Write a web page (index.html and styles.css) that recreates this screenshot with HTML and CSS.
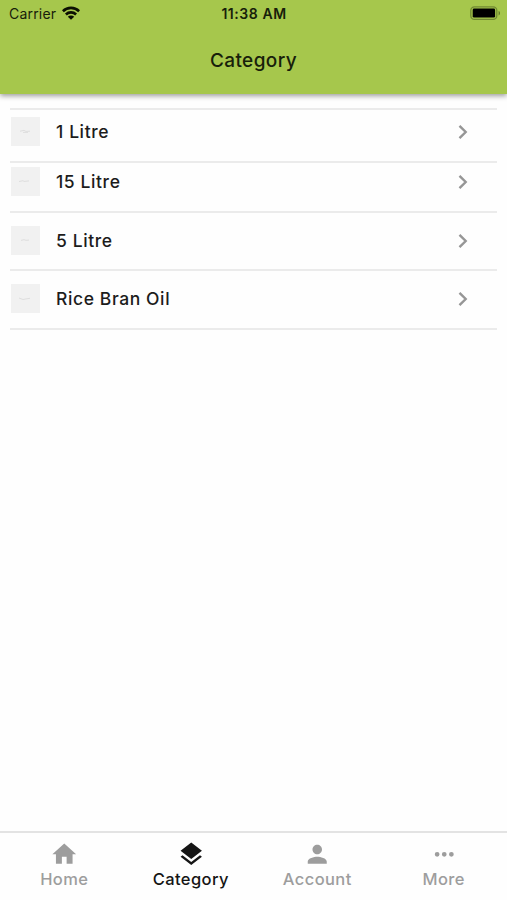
FILE: index.html
```
<!DOCTYPE html>
<html lang="en">
<head>
<meta charset="utf-8">
<title>Category</title>
<link rel="stylesheet" href="styles.css">
</head>
<body>
<div class="app">
  <header class="header">
    <div class="status">
      <div class="carrier"><span>Carrier</span>
        <svg class="wifi" width="18" height="14" viewBox="0 0 18 14"><g fill="none" stroke="#0b0f02" stroke-width="2.6"><path d="M.9 5.2a11.6 11.6 0 0 1 16.2 0"/><path d="M3.9 8.5a7.3 7.3 0 0 1 10.2 0"/></g><path fill="#0b0f02" d="M9 13.7 5.8 10.7a4.6 4.6 0 0 1 6.4 0z"/></svg>
      </div>
      <div class="time">11:38 AM</div>
      <svg class="battery" width="31" height="15" viewBox="0 0 31 15"><rect x=".8" y=".8" width="26" height="12.6" rx="3.6" fill="none" stroke="#718a32" stroke-width="1.3"/><rect x="2.7" y="2.6" width="22.4" height="9" rx="1.4" fill="#000"/><path d="M28.6 5v4.4c1.8-.6 1.8-3.8 0-4.4z" fill="#5f7429"/></svg>
    </div>
    <h1 class="title">Category</h1>
  </header>
  <main class="list">
    <div class="row row-first"><svg class="thumb" viewBox="0 0 29 29"><path d="M9 14.2l4-.8 2 1 4-.2M12 15.4h5"/></svg><span class="name">1 Litre</span><svg class="chevron" viewBox="0 0 10 16"><path d="M1.5 1.8 7.7 8l-6.2 6.2"/></svg></div>
    <div class="row row-second"><svg class="thumb" viewBox="0 0 29 29"><path d="M8 14.5l4-.8 1 .7 5-.5"/></svg><span class="name">15 Litre</span><svg class="chevron" viewBox="0 0 10 16"><path d="M1.5 1.8 7.7 8l-6.2 6.2"/></svg></div>
    <div class="row row-third"><svg class="thumb" viewBox="0 0 29 29"><path d="M10 14.4l3-.7 2 .6 3-.2"/></svg><span class="name">5 Litre</span><svg class="chevron" viewBox="0 0 10 16"><path d="M1.5 1.8 7.7 8l-6.2 6.2"/></svg></div>
    <div class="row row-fourth"><svg class="thumb" viewBox="0 0 29 29"><path d="M8 14l4 1.5 3-.6 4-.6"/></svg><span class="name">Rice Bran Oil</span><svg class="chevron" viewBox="0 0 10 16"><path d="M1.5 1.8 7.7 8l-6.2 6.2"/></svg></div>
  </main>
  <nav class="tabs">
    <div class="tab"><svg viewBox="0 0 24 24"><path d="M10 20v-6h4v6h5v-8h3L12 3 2 12h3v8z"/></svg><span>Home</span></div>
    <div class="tab active"><svg viewBox="0 0 24 24"><path d="M11.99 18.54l-7.37-5.73L3 14.07l9 7 9-7-1.63-1.27-7.38 5.74zM12 16l7.36-5.73L21 9l-9-7-9 7 1.63 1.27L12 16z"/></svg><span>Category</span></div>
    <div class="tab"><svg viewBox="0 0 24 24"><path d="M12 12c2.21 0 4-1.79 4-4s-1.79-4-4-4-4 1.79-4 4 1.79 4 4 4zm0 2c-2.67 0-8 1.34-8 4v2h16v-2c0-2.66-5.33-4-8-4z"/></svg><span>Account</span></div>
    <div class="tab"><svg viewBox="0 0 24 24"><path d="M6 10a2 2 0 1 0 0 4 2 2 0 0 0 0-4zm12 0a2 2 0 1 0 0 4 2 2 0 0 0 0-4zm-6 0a2 2 0 1 0 0 4 2 2 0 0 0 0-4z"/></svg><span>More</span></div>
  </nav>
</div>
</body>
</html>
```
FILE: styles.css
```
* { box-sizing: border-box; }
body {
  margin: 0;
  background: #fefefe;
  color: #1c1c1c;
  font-family: Inter, "Liberation Sans", sans-serif;
}
.app {
  height: 900px;
  display: flex;
  flex-direction: column;
}
.header {
  height: 94px;
  background: #a6c74c;
  box-shadow: 0 2px 5px rgba(0, 0, 0, .38);
}
.status {
  height: 27px;
  padding: 0 6px 0 9px;
  display: grid;
  grid-template-columns: 1fr auto 1fr;
  align-items: center;
  color: #17200a;
}
.carrier {
  display: flex;
  align-items: center;
  gap: 6px;
  font-size: 14px;
  letter-spacing: .2px;
}
.wifi { margin-top: -1px; }
.time {
  margin-left: -2px;
  font-size: 14px;
  font-weight: 600;
  letter-spacing: .55px;
}
.battery {
  justify-self: end;
}
.title {
  margin: 21px 0 0;
  font-size: 19px;
  line-height: 26px;
  font-weight: 500;
  letter-spacing: .4px;
  text-align: center;
  color: #17200a;
}
.list {
  flex: 1;
  margin: 14px 10px 0;
  border-top: 2px solid #ebebeb;
}
.row {
  display: flex;
  align-items: center;
  padding: 0 29px 0 1px;
  border-bottom: 2px solid #ebebeb;
}
.row-first { height: 53px; padding-bottom: 8px; }
.row-second { height: 50px; padding-bottom: 11px; }
.row-third { height: 58px; padding-bottom: 1px; }
.row-fourth { height: 59px; padding-bottom: 2px; }
.thumb {
  width: 29px;
  height: 29px;
  background: #f1f1f1;
}
.thumb path {
  fill: none;
  stroke: #dedede;
}
.name {
  flex: 1;
  margin-left: 16px;
  font-size: 17.5px;
  line-height: 24px;
  font-weight: 500;
  letter-spacing: .6px;
}
.chevron {
  width: 10px;
  height: 16px;
}
.chevron path {
  fill: none;
  stroke: #969696;
  stroke-width: 2.4;
}
.tabs {
  height: 69px;
  border-top: 2px solid #e3e3e3;
  padding-left: 1px;
  display: grid;
  grid-template-columns: repeat(4, 126.5px);
}
.tab {
  display: flex;
  flex-direction: column;
  align-items: center;
  padding-top: 7px;
  color: #9d9d9d;
  font-size: 16.5px;
  line-height: 20px;
  font-weight: 500;
  letter-spacing: .4px;
}
.tab svg {
  width: 28.5px;
  height: 28.5px;
  fill: currentColor;
}
.active { color: #151515; }
```
